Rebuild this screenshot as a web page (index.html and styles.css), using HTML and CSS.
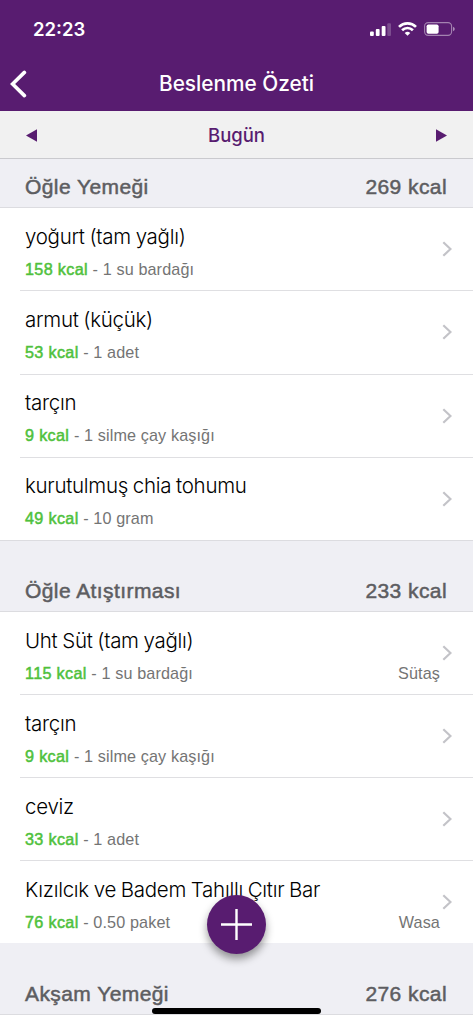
FILE: index.html
```html
<!DOCTYPE html>
<html lang="tr">
<head>
  <meta charset="UTF-8">
  <meta name="viewport" content="width=device-width, initial-scale=1.0">
  <title>Beslenme Özeti</title>
  <link rel="stylesheet" href="styles.css">
</head>
<body>

  <svg class="symbols">
    <symbol id="chevron" viewBox="0 0 10 16">
      <path d="M1.3 1.2 L8.5 8 L1.3 14.8" fill="none" stroke="#c3c3c8" stroke-width="2.2"/>
    </symbol>
  </svg>

  <header class="app-header">
    <div class="status-bar">
      <span class="clock">22:23</span>
      <div class="status-icons">
        <svg width="21" height="13" viewBox="0 0 21 13" fill="#fff">
          <rect x="0" y="8.6" width="3.8" height="4.4" rx="1"/>
          <rect x="5.8" y="6" width="3.8" height="7" rx="1"/>
          <rect x="11.7" y="3" width="3.8" height="10" rx="1"/>
          <rect x="17.3" y="0.3" width="3.7" height="12.7" rx="1" opacity="0.22"/>
        </svg>
        <svg class="wifi" width="19" height="14" viewBox="0 0 19 14" fill="none" stroke="#fff" stroke-width="2.7">
          <path d="M1 4.9 A12.2 12.2 0 0 1 18 4.9"/>
          <path d="M4.1 8.2 A7.7 7.7 0 0 1 14.9 8.2"/>
          <path d="M9.5 13.8 L6.7 11 A4 4 0 0 1 12.3 11 Z" fill="#fff" stroke="none"/>
        </svg>
        <svg width="31" height="14" viewBox="0 0 31 14">
          <rect x="0.6" y="0.6" width="27" height="12.8" rx="3.6" fill="none" stroke="#fff" stroke-opacity="0.45" stroke-width="1.1"/>
          <rect x="2.6" y="2.4" width="12" height="9.4" rx="1.8" fill="#fff"/>
          <path d="M29 4.8 Q30.8 5.6 30.8 7 Q30.8 8.4 29 9.2 Z" fill="#fff" opacity="0.5"/>
        </svg>
      </div>
    </div>
    <div class="nav-bar">
      <svg class="back" width="17" height="28" viewBox="0 0 17 28">
        <path d="M14.4 2.4 L2.6 14 L14.4 25.6" fill="none" stroke="#fff" stroke-width="3.6" stroke-linecap="round"/>
      </svg>
      <h1>Beslenme Özeti</h1>
    </div>
  </header>

  <div class="date-bar">
    <svg width="11" height="13" viewBox="0 0 11 13"><path d="M11 0.3 L0 6.5 L11 12.7 Z" fill="#581c70"/></svg>
    <span>Bugün</span>
    <svg width="11" height="13" viewBox="0 0 11 13"><path d="M0 0.3 L11 6.5 L0 12.7 Z" fill="#581c70"/></svg>
  </div>

  <main>
    <div class="meal-header first">
      <h2>Öğle Yemeği</h2>
      <span class="total">269 kcal</span>
    </div>
    <ul class="meal-list">
      <li>
        <div class="food">
          <p class="name">yoğurt (tam yağlı)</p>
          <p class="info"><b>158 kcal</b> - 1 su bardağı</p>
        </div>
        <svg class="chevron"><use href="#chevron"/></svg>
      </li>
      <li>
        <div class="food">
          <p class="name">armut (küçük)</p>
          <p class="info"><b>53 kcal</b> - 1 adet</p>
        </div>
        <svg class="chevron"><use href="#chevron"/></svg>
      </li>
      <li>
        <div class="food">
          <p class="name">tarçın</p>
          <p class="info"><b>9 kcal</b> - 1 silme çay kaşığı</p>
        </div>
        <svg class="chevron"><use href="#chevron"/></svg>
      </li>
      <li>
        <div class="food">
          <p class="name">kurutulmuş chia tohumu</p>
          <p class="info"><b>49 kcal</b> - 10 gram</p>
        </div>
        <svg class="chevron"><use href="#chevron"/></svg>
      </li>
    </ul>

    <div class="meal-header">
      <h2>Öğle Atıştırması</h2>
      <span class="total">233 kcal</span>
    </div>
    <ul class="meal-list">
      <li>
        <div class="food">
          <p class="name">Uht Süt (tam yağlı)</p>
          <p class="info"><b>115 kcal</b> - 1 su bardağı <span class="brand">Sütaş</span></p>
        </div>
        <svg class="chevron"><use href="#chevron"/></svg>
      </li>
      <li>
        <div class="food">
          <p class="name">tarçın</p>
          <p class="info"><b>9 kcal</b> - 1 silme çay kaşığı</p>
        </div>
        <svg class="chevron"><use href="#chevron"/></svg>
      </li>
      <li>
        <div class="food">
          <p class="name">ceviz</p>
          <p class="info"><b>33 kcal</b> - 1 adet</p>
        </div>
        <svg class="chevron"><use href="#chevron"/></svg>
      </li>
      <li>
        <div class="food">
          <p class="name">Kızılcık ve Badem Tahıllı Çıtır Bar</p>
          <p class="info"><b>76 kcal</b> - 0.50 paket <span class="brand">Wasa</span></p>
        </div>
        <svg class="chevron"><use href="#chevron"/></svg>
      </li>
    </ul>

    <div class="meal-header last">
      <h2>Akşam Yemeği</h2>
      <span class="total">276 kcal</span>
    </div>
  </main>

  <button class="add-btn" aria-label="Ekle">
    <svg width="31" height="31" viewBox="0 0 31 31" stroke="#fff" stroke-width="2.4">
      <path d="M15.5 0 V31 M0 15.5 H31"/>
    </svg>
  </button>
  <div class="home-indicator"></div>

</body>
</html>
```
FILE: styles.css
```css
* {
  box-sizing: border-box;
  margin: 0;
  padding: 0;
}

body {
  font-family: Inter, 'Liberation Sans', sans-serif;
  background-color: #fff;
  height: 1024px;
  overflow: hidden;
}

.symbols {
  display: none;
}

.app-header {
  height: 111px;
  background-color: #581c70;
  color: #fff;
}

.status-bar {
  display: flex;
  justify-content: space-between;
  align-items: center;
  height: 57px;
  padding: 1px 18px 0 33px;
}

.clock {
  font-size: 18.5px;
  font-weight: 600;
}

.status-icons {
  display: flex;
  align-items: center;
}

.wifi {
  margin: 0 7px 0 7px;
}

.nav-bar {
  display: grid;
  grid-template-columns: 40px 1fr 40px;
  align-items: center;
  height: 53px;
  padding: 0 10px;
}

h1 {
  font-size: 20.8px;
  font-weight: 550;
  text-align: center;
}

.date-bar {
  display: flex;
  justify-content: space-between;
  align-items: center;
  height: 48px;
  padding: 1px 26px 0;
  background-color: #f1f1f1;
  border-bottom: 1px solid #cacace;
  color: #581c70;
  font-size: 18.5px;
  font-weight: 550;
}

.meal-header {
  display: flex;
  justify-content: space-between;
  align-items: flex-end;
  height: 71px;
  padding: 0 26px 7px 25px;
  background-color: #efeff4;
  border-bottom: 1px solid #dcdce0;
  color: #5d5d61;
  font-family: 'Liberation Sans', sans-serif;
  font-size: 21px;
  letter-spacing: 0.42px;
  line-height: 26px;
  -webkit-text-stroke: 0.5px #5d5d61;
}

.meal-header.first {
  height: 49px;
}

.meal-header.last {
  height: 72px;
}

h2 {
  font-size: 21px;
  font-weight: 400;
}

.meal-list {
  list-style: none;
  padding-left: 20px;
  border-bottom: 1px solid #dcdce0;
}

.meal-list li {
  display: flex;
  align-items: center;
  height: 83.25px;
  padding: 0 21px 0 5px;
}

.meal-list li:first-child {
  height: 82.25px;
}

.meal-list li + li {
  border-top: 1px solid #dfdfe2;
}

.meal-list:last-of-type {
  border-bottom: none;
}

.meal-list:last-of-type li {
  height: 83px;
}

.meal-list:last-of-type li:first-child {
  height: 82px;
}

.food {
  flex: 1;
  padding-top: 3px;
}

.name {
  font-size: 20.5px;
  font-weight: 300;
  letter-spacing: -0.28px;
  word-spacing: -0.7px;
  line-height: 29px;
  color: #000;
}

.info {
  display: flex;
  font-family: 'Liberation Sans', sans-serif;
  font-size: 16.2px;
  letter-spacing: 0.12px;
  line-height: 22px;
  margin-top: 7px;
  white-space: pre;
  color: #747474;
}

.info b {
  font-weight: 400;
  letter-spacing: 0.33px;
  color: #4fc13c;
  -webkit-text-stroke: 0.5px #4fc13c;
}

.brand {
  margin-left: auto;
  padding-right: 2px;
}

.chevron {
  width: 10px;
  height: 16px;
}

.add-btn {
  position: fixed;
  left: 207px;
  top: 895px;
  display: flex;
  align-items: center;
  justify-content: center;
  width: 59px;
  height: 59px;
  border: none;
  border-radius: 50%;
  background-color: #581c70;
  box-shadow: 0 5px 9px rgba(0, 0, 0, 0.4);
}

.home-indicator {
  position: fixed;
  left: 152px;
  bottom: 10px;
  width: 169px;
  height: 6px;
  border-radius: 3px;
  background-color: #000;
}
```
